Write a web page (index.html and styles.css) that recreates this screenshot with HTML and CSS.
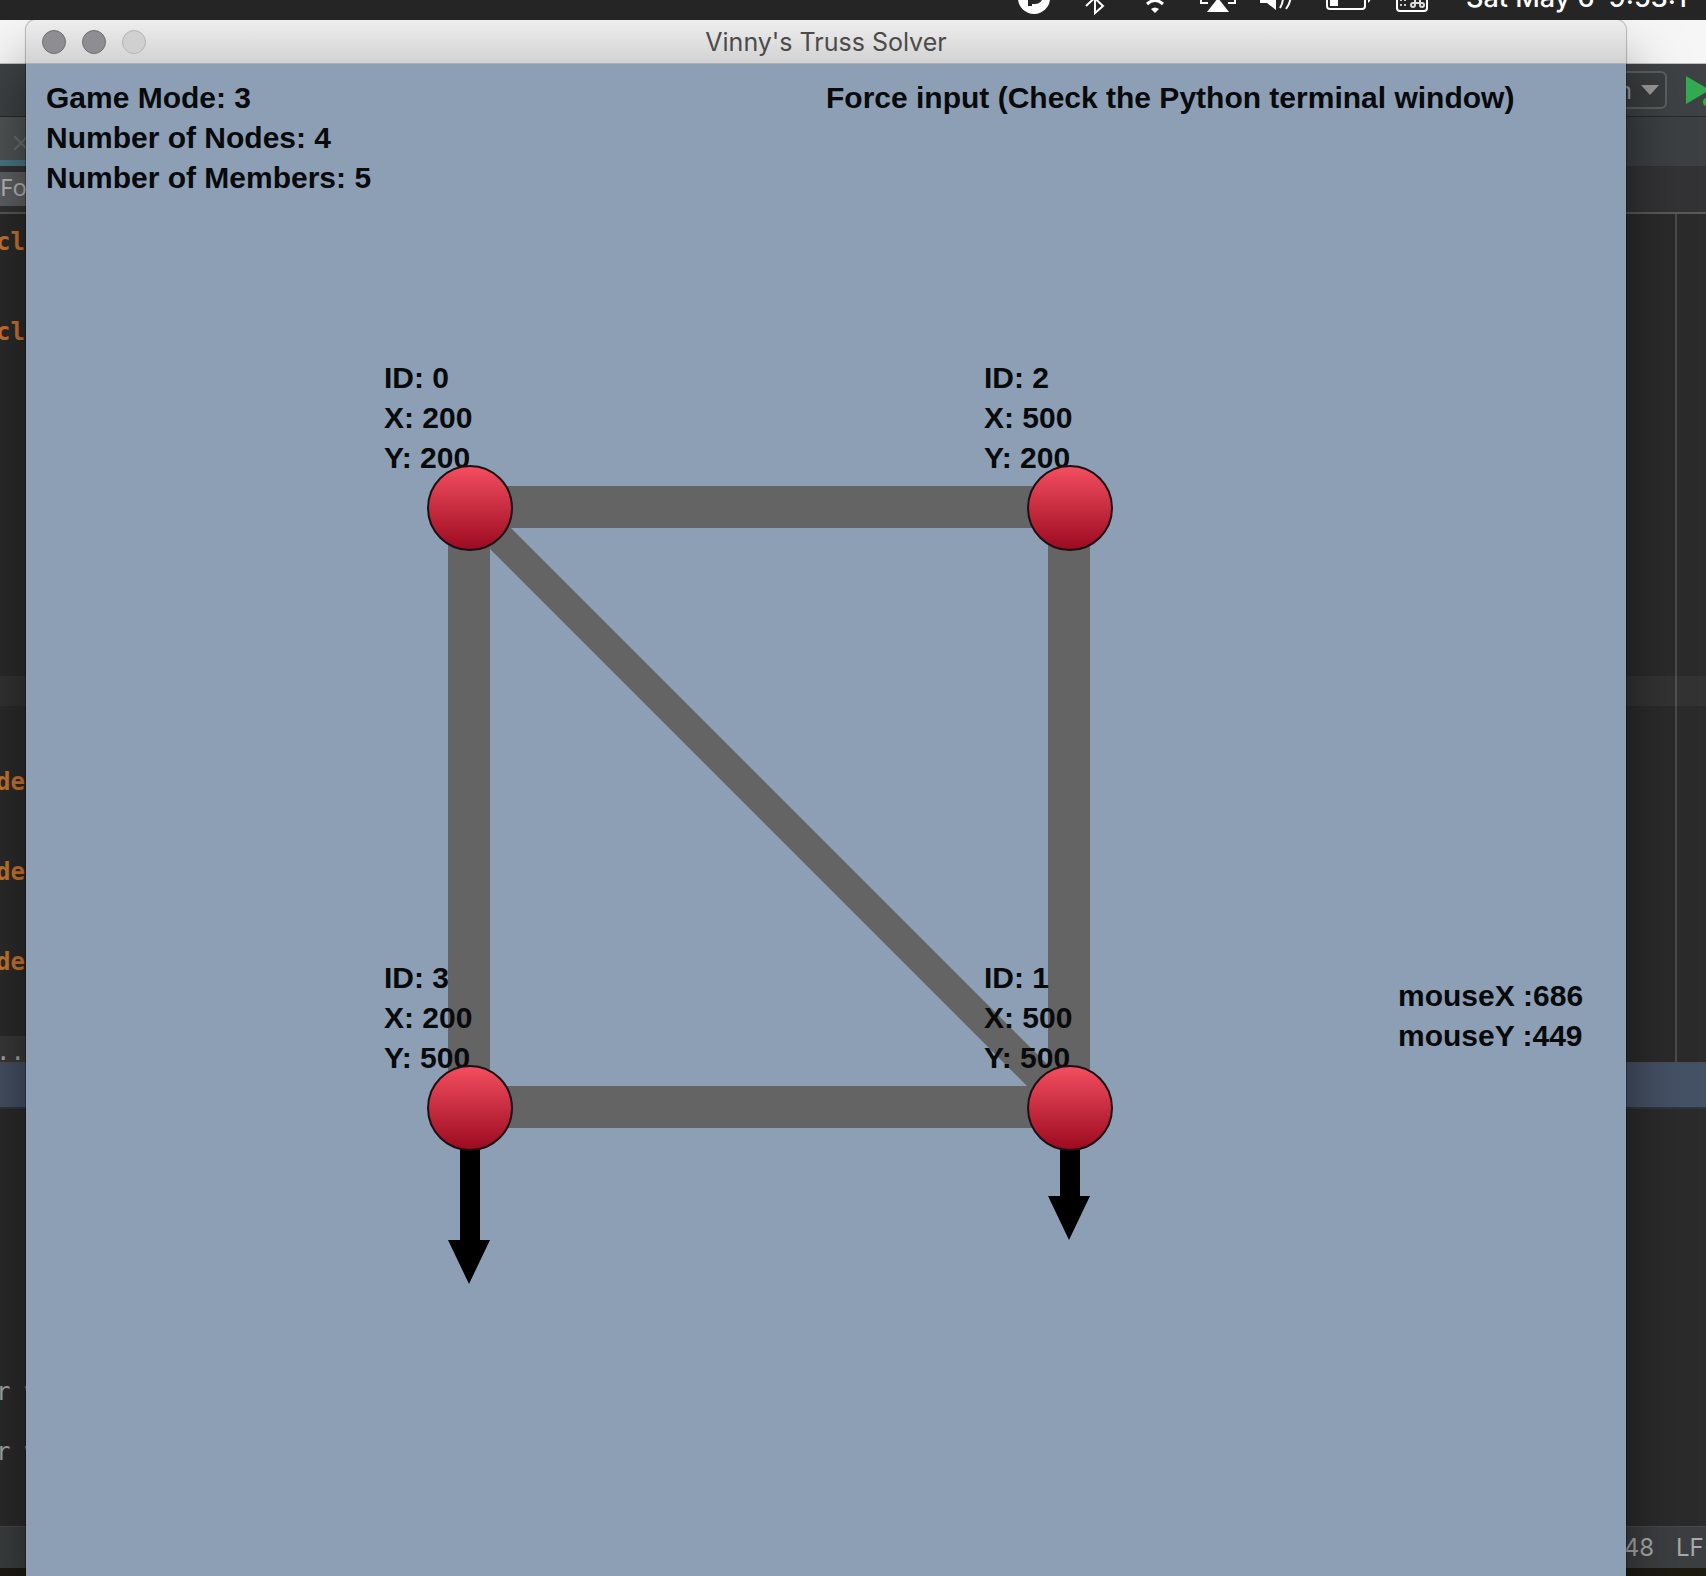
FILE: index.html
```html
<!DOCTYPE html>
<html lang="en">
<head>
<meta charset="utf-8">
<title>Vinny's Truss Solver</title>
<link rel="stylesheet" href="styles.css">
</head>
<body>
<header class="menubar">
  <svg class="menu-icon" width="38" height="44" viewBox="1018 -24 38 44"><circle cx="1034" cy="-2" r="16" fill="#fff"/><path d="M1028 -12h7a8 8 0 0 1 0 16h-3v2h-4z" fill="#252525"/><path d="M1032 -8h3a4 4 0 0 1 0 8h-3z" fill="#fff"/></svg>
  <svg class="menu-icon" width="30" height="44" viewBox="1080 -24 30 44"><path d="M1086 6L1103 -10L1095 -17V13L1103 6L1086 -10" fill="none" stroke="#fff" stroke-width="2"/></svg>
  <svg class="menu-icon" width="42" height="44" viewBox="1134 -24 42 44"><path d="M1151 9q4-3 8 0l-4 4z" fill="#fff"/><path d="M1147 4q8-7 16 0M1141-3q14-11 28 0" fill="none" stroke="#fff" stroke-width="3"/></svg>
  <svg class="menu-icon" width="36" height="44" viewBox="1200 -24 36 44"><path d="M1218 -2l11 14h-22z" fill="#fff"/><path d="M1208 3h-7v-20h34v20h-7" fill="none" stroke="#fff" stroke-width="2"/></svg>
  <svg class="menu-icon" width="42" height="44" viewBox="1260 -24 42 44"><path d="M1260 3v-10h7l9-7v24l-9-7z" fill="#fff"/><path d="M1280 8q6-10 0-20M1286 9q9-12 0-24" fill="none" stroke="#fff" stroke-width="2"/></svg>
  <svg class="menu-icon" width="46" height="44" viewBox="1326 -24 46 44"><rect x="1327" y="-13" width="38" height="22" rx="3" fill="none" stroke="#fff" stroke-width="2"/><path d="M1330 -10h8V6h-8zM1368 -7q6 5 0 10z" fill="#fff"/></svg>
  <svg class="menu-icon" width="46" height="44" viewBox="1396 -24 46 44"><rect x="1397" y="-17" width="30" height="28" rx="3" fill="none" stroke="#fff" stroke-width="2"/><path d="M1400 -1h2v2h-2zM1404 -1h2v2h-2zM1400 4h2v2h-2zM1404 4h2v2h-2z" fill="#ccc"/><path d="M1415 -4v9a2 2 0 1 1-2-2h9a2 2 0 1 1-2 2v-9a2 2 0 1 1 2 2h-9a2 2 0 1 1 2-2z" fill="none" stroke="#ddd" stroke-width="2"/></svg>
  <time class="clock">Sat May 6  9:53:1</time>
</header>
<main class="desktop">
  <section class="ide">
    <div class="ide-title"></div>
    <div class="ide-toolbar">
      <button class="run-config" type="button">n<svg width="18" height="10" viewBox="0 0 18 10"><path d="M0 0h18L9 10z" fill="#9a9a9a"/></svg></button>
      <svg width="20" height="40" viewBox="0 0 20 40"><path d="M0 6l24 14L0 34z" fill="#33ab52"/><circle cx="21" cy="32" r="4" fill="#12c512"/></svg>
    </div>
    <div class="tab-strip"><div class="tab"><svg width="14" height="14" viewBox="0 0 14 14"><path d="M0 0l14 14M14 0L0 14" stroke="#6c7072" stroke-width="2"/></svg></div></div>
    <div class="crumbs"><span class="crumb">Fo</span></div>
    <div class="editor">
      <pre class="code"><span class="line">class</span><span class="line"></span><span class="line"></span><span class="line">class</span><span class="line"></span><span class="line"></span><span class="line"></span><span class="line"></span><span class="line"></span><span class="line"></span><span class="line"></span><span class="line"></span><span class="line"></span><span class="line"></span><span class="line"></span><span class="line current"></span><span class="line"></span><span class="line"></span><span class="line">def</span><span class="line"></span><span class="line"></span><span class="line">def</span><span class="line"></span><span class="line"></span><span class="line">def</span><span class="line"></span><span class="line"></span></pre>
      <div class="fold-bar">...</div>
    </div>
    <div class="panel-title"></div>
    <div class="console"><p>r w</p><p>r w</p></div>
    <footer class="status"><span>48</span><span class="ending">LF÷</span></footer>
    <div class="wallpaper"></div>
  </section>
  <section class="window">
    <div class="titlebar">
      <div class="lights">
        <button class="light" type="button" aria-label="Close"></button>
        <button class="light" type="button" aria-label="Minimize"></button>
        <button class="light off" type="button" aria-label="Zoom" disabled></button>
      </div>
      <h1 class="title">Vinny's Truss Solver</h1>
    </div>
    <div class="canvas">
      <div class="hud">
        <div><p>Game Mode: 3</p><p>Number of Nodes: 4</p><p>Number of Members: 5</p></div>
        <p>Force input (Check the Python terminal window)</p>
      </div>
      <svg class="truss">
        <defs>
          <linearGradient id="ball" x1="0" y1="0" x2="0" y2="1"><stop offset="0" stop-color="#f44f60"/><stop offset="1" stop-color="#9b0a20"/></linearGradient>
        </defs>
        <g fill="#646464">
          <rect x="443" y="422" width="600" height="42"/>
          <rect x="443" y="1022" width="600" height="42"/>
          <rect x="422" y="443" width="42" height="600"/>
          <rect x="1022" y="443" width="42" height="600"/>
          <path d="M464 443L1064 1043H1022L422 443z"/>
        </g>
        <path d="M434 1043h20v133h10l-21 44l-21-44h12zM1034 1043h20v89h10l-21 44l-21-44h12z"/>
      </svg>
      <div class="label n0"><p>ID: 0</p><p>X: 200</p><p>Y: 200</p></div>
      <div class="label n1"><p>ID: 1</p><p>X: 500</p><p>Y: 500</p></div>
      <div class="label n2"><p>ID: 2</p><p>X: 500</p><p>Y: 200</p></div>
      <div class="label n3"><p>ID: 3</p><p>X: 200</p><p>Y: 500</p></div>
      <svg class="truss">
        <g fill="url(#ball)" stroke="#1c1014" stroke-width="2">
          <circle cx="444" cy="444" r="42"/>
          <circle cx="1044" cy="444" r="42"/>
          <circle cx="444" cy="1044" r="42"/>
          <circle cx="1044" cy="1044" r="42"/>
        </g>
      </svg>
      <div class="label mouse"><p>mouseX :686</p><p>mouseY :449</p></div>
    </div>
  </section>
</main>
</body>
</html>
```
FILE: styles.css
```css
* { box-sizing: border-box; }
body {
  margin: 0;
  height: 100vh;
  display: flex;
  flex-direction: column;
  overflow: hidden;
  background: #252525;
}
p, h1, pre { margin: 0; }

/* Menu bar */
.menubar {
  flex: none;
  height: 20px;
  display: flex;
  justify-content: flex-end;
  align-items: flex-end;
  gap: 24px;
  overflow: hidden;
  background: #252525;
  color: #fff;
}
.menu-icon { flex: none; }
.clock {
  flex: none;
  width: 240px;
  font: 500 27px/44px Inter, sans-serif;
  white-space: pre;
}

.desktop {
  flex: 1;
  position: relative;
  display: flex;
  min-height: 0;
  overflow: hidden;
}

/* Editor behind the window */
.ide {
  flex: 1;
  display: flex;
  flex-direction: column;
  background: #2b2b2b;
  color: #a9a9a9;
  font: 24px/30px "Noto Sans", sans-serif;
}
.ide-title { flex: none; height: 44px; background: #f6f6f6; border-bottom: 1px solid #c0c0c0; }
.ide-toolbar {
  flex: none;
  height: 53px;
  display: flex;
  justify-content: flex-end;
  align-items: center;
  gap: 19px;
  background: #3e4244;
  border-bottom: 1px solid #282828;
}
.run-config {
  width: 180px;
  height: 38px;
  padding: 0 6px;
  display: flex;
  justify-content: flex-end;
  align-items: center;
  gap: 9px;
  border: 2px solid #5c5e60;
  border-radius: 6px;
  background: #3a3d3f;
  color: #9a9a9a;
  font: inherit;
}
.tab-strip { flex: none; height: 49px; background: #3c4043; }
.tab {
  width: 50%;
  height: 49px;
  padding: 19px 14px;
  display: flex;
  background: #515556;
  border-bottom: 6px solid #4a7786;
}
.crumbs {
  flex: none;
  height: 48px;
  display: flex;
  align-items: center;
  background: #333335;
  border-bottom: 2px solid #5a5a5a;
}
.crumb { height: 34px; padding-right: 16px; background: #5f6263; color: #bbb; }
.editor {
  flex: none;
  padding-top: 12px;
  background: linear-gradient(#4b4b4b, #4b4b4b) right 29px top / 2px 100% no-repeat;
}
.code { font: bold 24px/32px "DejaVu Sans Mono", monospace; color: #cc7832; }
.line { display: block; height: 30px; text-indent: -4px; }
.current { background: rgba(255, 255, 255, 0.04); }
.fold-bar {
  width: 50%;
  height: 26px;
  background: #393939;
  font: 24px/32px "DejaVu Sans Mono", monospace;
  text-indent: -4px;
}
.panel-title { flex: none; height: 47px; background: #455165; border-top: 2px solid #4b4f55; border-bottom: 2px solid #2f3542; }
.console {
  flex: 1;
  padding-top: 268px;
  display: flex;
  flex-direction: column;
  gap: 30px;
  font: 24px/30px "DejaVu Sans Mono", monospace;
  text-indent: -4px;
}
.status {
  flex: none;
  height: 42px;
  display: flex;
  justify-content: flex-end;
  align-items: center;
  gap: 22px;
  background: #3c3f41;
  border-top: 1px solid #4a4a4a;
  font: 24px/30px Inter, sans-serif;
}
.ending { width: 30px; white-space: nowrap; }
.wallpaper { flex: none; height: 8px; background: #1d1b10; }

/* Application window */
.window {
  position: absolute;
  top: 0;
  bottom: 0;
  left: 26px;
  right: 80px;
  display: flex;
  flex-direction: column;
  border-radius: 10px 10px 0 0;
  box-shadow: 0 0 1px 1px rgba(0, 0, 0, 0.25), 0 44px 60px rgba(0, 0, 0, 0.5);
}
.titlebar {
  flex: none;
  height: 44px;
  padding: 0 16px;
  display: grid;
  grid-template-columns: 1fr auto 1fr;
  align-items: center;
  border-radius: 10px 10px 0 0;
  background: linear-gradient(#eee, #d2d2d2);
  border-bottom: 1px solid #b0b0b0;
}
.lights { display: flex; gap: 16px; }
.light {
  width: 24px;
  height: 24px;
  padding: 0;
  border: 1px solid #6f6f74;
  border-radius: 50%;
  background: #8e8d92;
}
.off { border-color: #b4b4b4; background: #d0d0d0; }
.title { color: #4b4b4b; font: 400 25px/32px Inter, sans-serif; }
.canvas {
  flex: 1;
  position: relative;
  overflow: hidden;
  background: #8d9fb5;
  color: #080a0c;
  font: bold 30px/40px "Liberation Sans", Arial, sans-serif;
}
.hud {
  padding: 14px 20px 0;
  display: grid;
  grid-template-columns: 1fr 1fr;
  white-space: nowrap;
}
.truss { position: absolute; top: 0; left: 0; width: 100%; height: 100%; }
.label { position: absolute; white-space: nowrap; }
.n0 { left: 358px; top: 294px; }
.n1 { left: 958px; top: 894px; }
.n2 { left: 958px; top: 294px; }
.n3 { left: 358px; top: 894px; }
.mouse { left: 1372px; top: 912px; }
```
